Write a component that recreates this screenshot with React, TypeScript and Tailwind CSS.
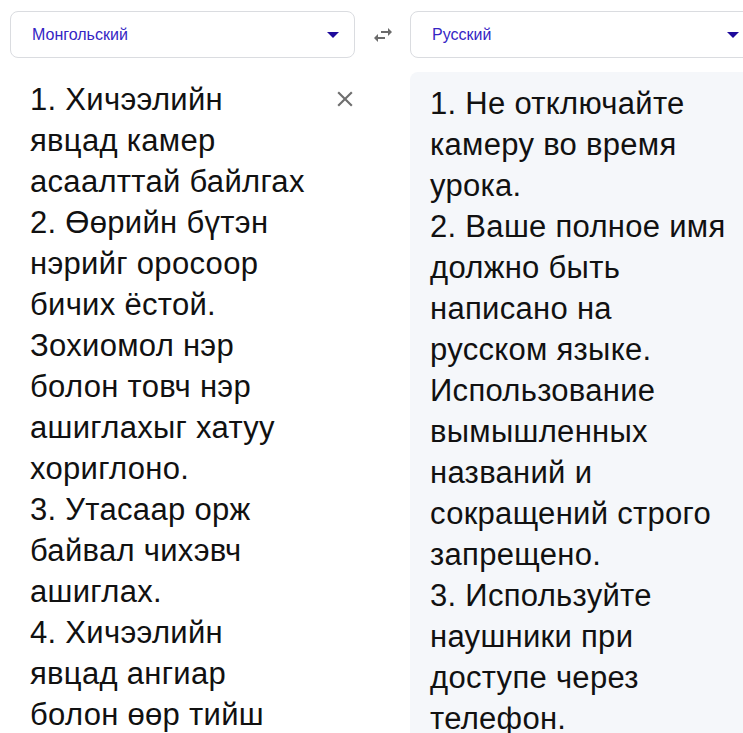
const sourceText = `1. Хичээлийн
явцад камер
асаалттай байлгах
2. Өөрийн бүтэн
нэрийг оросоор
бичих ёстой.
Зохиомол нэр
болон товч нэр
ашиглахыг хатуу
хориглоно.
3. Утасаар орж
байвал чихэвч
ашиглах.
4. Хичээлийн
явцад ангиар
болон өөр тийш
явахгүй байх.`;

const targetText = `1. Не отключайте
камеру во время
урока.
2. Ваше полное имя
должно быть
написано на
русском языке.
Использование
вымышленных
названий и
сокращений строго
запрещено.
3. Используйте
наушники при
доступе через
телефон.
4. Не покидайте
класс во время
урока.`;

function LangSelect({ label }: { label: string }) {
  return (
    <div className="flex h-[47px] w-[345px] shrink-0 items-center justify-between rounded-lg border border-[#dadce0] bg-white pl-[21px] pr-[15px]">
      <span className="text-[16px] text-[#3525c4]">{label}</span>
      <svg width="12" height="6" viewBox="0 0 12 6">
        <path d="M0 0h12L6 6z" fill="#1f0b9c" />
      </svg>
    </div>
  );
}

function SwapIcon() {
  return (
    <svg width="24" height="24" viewBox="0 0 24 24" fill="#6b6b6b">
      <path d="M6.99 11L3 15l3.99 4v-3H14v-2H6.99v-3zM21 9l-3.99-4v3H10v2h7.01v3L21 9z" />
    </svg>
  );
}

function ClearIcon() {
  return (
    <svg width="26" height="26" viewBox="0 0 24 24" fill="#6f6f6f">
      <path d="M19 6.41L17.59 5 12 10.59 6.41 5 5 6.41 10.59 12 5 17.59 6.41 19 12 13.41 17.59 19 19 17.59 13.41 12z" />
    </svg>
  );
}

export default function App() {
  return (
    <div className="h-[733px] w-[743px] overflow-hidden bg-white font-['Liberation_Sans',Arial,sans-serif]">
      <div className="w-[760px]">
        <div className="flex items-center pl-[10px] pt-[11px]">
          <LangSelect label="Монгольский" />
          <div className="flex w-[55px] justify-center">
            <SwapIcon />
          </div>
          <LangSelect label="Русский" />
        </div>

        <div className="mt-[14px] flex h-[700px]">
          <div className="flex w-[400px] shrink-0 pl-[30px] pt-[7px]">
            <p className="w-[300px] whitespace-pre text-[31px] leading-[41px] tracking-[0.3px] text-[#111]">
              {sourceText}
            </p>
            <button className="ml-[2px] mt-[7px] h-[26px] w-[26px] self-start">
              <ClearIcon />
            </button>
          </div>
          <div className="ml-[10px] flex-1 rounded-tl-lg bg-[#f5f7fa] pl-[20px] pt-[11px]">
            <p className="whitespace-pre text-[31px] leading-[41px] tracking-[0.3px] text-[#111]">
              {targetText}
            </p>
          </div>
        </div>
      </div>
    </div>
  );
}
